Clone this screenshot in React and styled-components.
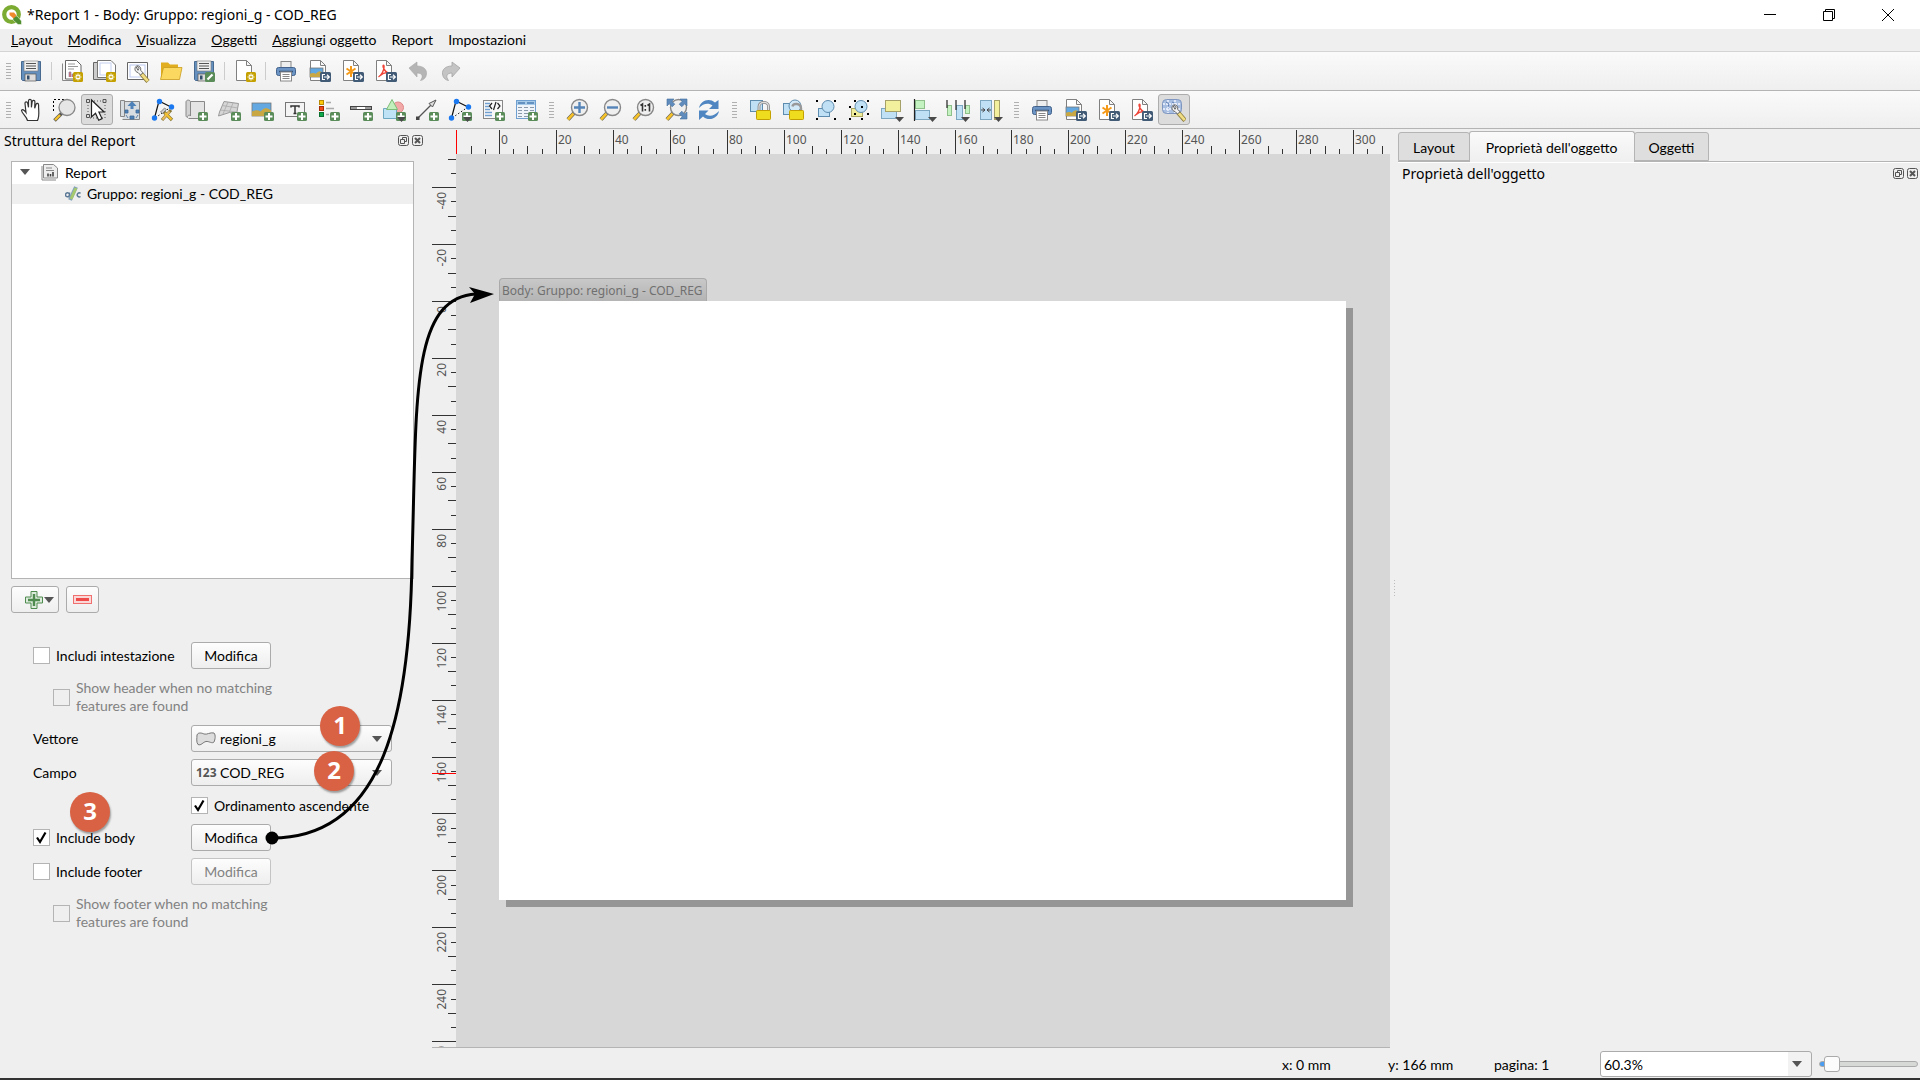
import React from "react";
import styled, { createGlobalStyle, css } from "styled-components";

const UI_FONT = `Lato, "Liberation Sans", sans-serif`;
const TITLE_FONT = `"Noto Sans", "Open Sans", sans-serif`;

// canvas geometry: pixels per millimetre and the offset of 0 mm inside each ruler
const SCALE = 2.847;
const ORIGIN_X = 43;
const ORIGIN_Y = 147;

/* ---------- icon parts ---------- */

const PlusBadge = () => (
  <g>
    <rect x="14" y="14" width="10" height="9" rx="1.5" fill="#5a8c5a" />
    <path d="M19 15v7M15.5 18.5h7" stroke="#fff" strokeWidth="2" />
  </g>
);

const StarBadge = () => (
  <g>
    <rect x="13" y="13" width="10" height="10" rx="1.5" fill="#c4a000" />
    <path d="M18 14.5v7M14.5 18h7M15.7 15.7l4.6 4.6M20.3 15.7l-4.6 4.6" stroke="#fff" strokeWidth="1.1" />
    <circle cx="18" cy="18" r="1" fill="#c4a000" />
  </g>
);

const ExportBadge = () => (
  <g>
    <rect x="13" y="13" width="11" height="10" rx="1.5" fill="#415a75" />
    <path d="M18 15.5h-2.5v5H18M17 18h5M20 15.8l2.3 2.2-2.3 2.2" fill="none" stroke="#fff" strokeWidth="1.2" />
  </g>
);

const MenuArrow = () => <path d="M15 19h9l-4.500 5z" fill="#4a4a4a" />;

const Sheet = () => (
  <path d="M3.500 1.500h10l5 5v15h-15zM13.500 1.500v5h5" fill="#fff" stroke="#808080" />
);

const Lens = ({ children }) => (
  <g>
    <path d="M10 14l-7 7.500" stroke="#555" strokeWidth="4" />
    <path d="M8.500 15.500l-5.500 6" stroke="#f5c22b" strokeWidth="2.600" />
    <path d="M11 13l-2 2" stroke="#222" strokeWidth="3" />
    <circle cx="14.500" cy="9.500" r="8" fill="#efefef" stroke="#888" strokeWidth="1.400" />
    {children}
  </g>
);

const Wrench = () => (
  <g>
    <path d="M14 13.500l7 8" stroke="#8a7a3a" strokeWidth="4.400" />
    <path d="M14.500 14l6.300 7.200" stroke="#f0dc82" strokeWidth="2.800" />
    <path d="M9 6.500c-2 2-1 5.500 2 6l2.500 2.500 2.500-2.200-2.300-2.500c.6-3-1.500-4.800-4-4.500l2.300 2.500-1 2z" fill="#f2f2f2" stroke="#666" />
  </g>
);

const Floppy = () => (
  <g>
    <path d="M2.500 2.500h19v19h-18l-1-1z" fill="#6490c0" stroke="#486a90" />
    <rect x="5" y="2" width="14" height="10" fill="#f0f0f0" stroke="#777" strokeWidth=".6" />
    <path d="M7 4.500h10M7 7h10M7 9.500h10" stroke="#555" />
    <rect x="6" y="15" width="11" height="7" fill="#ddd" stroke="#555" strokeWidth=".7" />
    <rect x="8" y="16.500" width="2.500" height="4" fill="#334d6b" />
  </g>
);

const Nodes = () => (
  <g>
    <path d="M8 3L3.500 20M8 3l12 6" stroke="#111" strokeWidth="1.200" />
    <path d="M20 9L4 20" stroke="#111" strokeDasharray="1.500 2" />
    <circle cx="8.500" cy="3.500" r="2.700" fill="#1a78f0" />
    <circle cx="20.500" cy="9" r="2.700" fill="#1a78f0" />
    <circle cx="3.500" cy="20" r="2.700" fill="#1a78f0" />
  </g>
);

const Landscape = ({ x, y, w, h }) => (
  <g>
    <rect x={x} y={y} width={w} height={h} fill="#63a8e0" stroke="#777" strokeWidth=".8" />
    <path d={`M${x} ${y + h * 0.65}q${w * 0.25} ${-h * 0.2} ${w * 0.45} 0q${w * 0.25} ${-h * 0.5} ${w * 0.55} -1V${y + h}H${x}z`} fill="#c9a743" />
  </g>
);

const Corners = ({ x, y, s }) => (
  <g fill="#000">
    <rect x={x} y={y} width="2" height="2" />
    <rect x={x + s} y={y} width="2" height="2" />
    <rect x={x} y={y + s} width="2" height="2" />
    <rect x={x + s} y={y + s} width="2" height="2" />
  </g>
);

const Padlock = () => (
  <rect x="8.500" y="12.500" width="14" height="9" rx=".8" fill="#f0dc1e" stroke="#c4a000" />
);

const ICONS = {
  save: <Floppy />,
  newReport: (
    <g>
      <path d="M2.500 4.500v17h14" fill="none" stroke="#888" />
      <path d="M5.500 1.500h11l4.500 4.500v14h-15.500z" fill="#fff" stroke="#666" />
      <path d="M8 5h7M8 7.500h10M8 10h6" stroke="#999" />
      <path d="M9 18v-5h2v5M12 18v-3h2v3" fill="#d66" stroke="#88a" strokeWidth=".7" />
      <StarBadge />
    </g>
  ),
  duplicate: (
    <g>
      <path d="M.5 3.500v17h16v-17z" fill="#ccc" stroke="#666" />
      <path d="M4.500 1.500h13.500l4.500 4.500v12.500h-18z" fill="#fff" stroke="#777" />
      <rect x="7" y="4" width="11" height="12" fill="none" stroke="#c5d0f0" />
      <StarBadge />
    </g>
  ),
  manager: (
    <g>
      <path d="M1.500 3.500h20v17h-20z" fill="#fff" stroke="#666" />
      <rect x="4" y="6" width="15" height="12" fill="none" stroke="#bccaf0" />
      <g transform="translate(1 1)"><Wrench /></g>
    </g>
  ),
  open: (
    <g>
      <path d="M2 20V3.500h7l2 2h8V20z" fill="#e0ae1e" />
      <path d="M4.500 8.500h18.500L20.500 20.500H1.500z" fill="#fbd960" stroke="#c99a1b" strokeWidth=".8" />
    </g>
  ),
  saveAs: (
    <g>
      <Floppy />
      <rect x="13" y="13" width="10" height="10" rx="1.500" fill="#5a8c5a" />
      <path d="M15.500 20.500l5-5" stroke="#fff" strokeWidth="2.200" />
    </g>
  ),
  newPage: <g><Sheet /><StarBadge /></g>,
  print: (
    <g>
      <rect x="7" y="2.500" width="10" height="7" fill="#eee" stroke="#888" />
      <rect x="2.500" y="8.500" width="19" height="8" rx="2" fill="#6b94c4" stroke="#43638c" />
      <path d="M5 12.500h14" stroke="#35537a" strokeWidth="1.500" />
      <rect x="6.500" y="13" width="11" height="9" fill="#fff" stroke="#888" />
      <path d="M8.500 15.500h7M8.500 17.500h7M8.500 19.500h7" stroke="#888" />
    </g>
  ),
  exportImage: <g><Sheet /><Landscape x={3} y={9} w={13} h={9} /><ExportBadge /></g>,
  exportSvg: (
    <g>
      <Sheet />
      <path d="M11 7v11M6.500 9.500l9 6M15.500 9.500l-9 6" stroke="#f59a18" strokeWidth="2" />
      <ExportBadge />
    </g>
  ),
  exportPdf: (
    <g>
      <Sheet />
      <path d="M5.500 18c3-2 6-7 5.500-11-.2-1.500-1.300-.5-.8 1 1.200 4 4 6 6.800 6-3-1-7 0-10.500 3" fill="none" stroke="#ef4438" strokeWidth="1.500" />
      <ExportBadge />
    </g>
  ),
  undo: <path d="M3 9l8-6v4c7 0 10 4 9.500 8-.5 4-3 6-6 6.500 3-4 2-7.500-3.500-7.500v4z" fill="#b5b5b5" stroke="#a5a5a5" strokeWidth=".6" />,
  redo: <path d="M21 9l-8-6v4C6 7 3 11 3.500 15c.5 4 3 6 6 6.500-3-4-2-7.500 3.500-7.500v4z" fill="#c4c4c4" stroke="#a5a5a5" strokeWidth=".8" />,
  pan: (
    <path
      d="M8.500 22.500c-1-4-5.500-7-6-10 .8-1.600 2.500-.7 4.500 2L6 5.500C5.800 3.500 8.200 3.300 8.700 5.300l.8 4V2.700c.2-1.900 2.700-1.900 2.900 0v6.600l.8-5.800c.4-1.700 2.700-1.300 2.700.3l-.2 6.400 1.300-4c.7-1.500 2.700-.9 2.600.9C19.300 12 21 17 18.500 22.500z"
      fill="#fff"
      stroke="#333"
      strokeWidth="1.200"
    />
  ),
  zoom: (
    <g>
      <path d="M1.500 13V1.500H14" fill="none" stroke="#000" strokeDasharray="2 2" />
      <path d="M10.500 14.500l-8 8" stroke="#555" strokeWidth="3.600" />
      <path d="M8 17l-5 5" stroke="#f5c22b" strokeWidth="2.400" />
      <circle cx="15" cy="9.500" r="8" fill="#e4e4e4" fillOpacity=".9" stroke="#888" strokeWidth="1.300" />
    </g>
  ),
  select: (
    <g>
      <path d="M3 3h17v17H3z" fill="none" stroke="#555" strokeDasharray="1 2" />
      <path d="M1.500 1.500h3v3h-3zM18 1.500h3v3h-3zM1.500 16.500h3v3h-3z" fill="#ddd" stroke="#555" />
      <path d="M6.500 2v17l4-3.700 3.200 6.900 3.300-1.600-3.100-6.600h5.200z" fill="#fff" stroke="#222" strokeWidth="1.200" />
    </g>
  ),
  moveContent: (
    <g>
      <path d="M2.500 2.500h4v16h-4zM6.500 3.500h15v18h-17" fill="#d8dde2" stroke="#888" />
      <path d="M14 3l4.500 5h-3v3h-3V8h-3z" fill="#4f82b8" />
      <path d="M7 12h3v3H7zM18 12h3v3h-3zM12 18h4v3h-4zM8 17l2 3M20 17l-2 3" fill="#4f82b8" stroke="#3d6a9b" strokeWidth=".8" />
    </g>
  ),
  editNodes: (
    <g>
      <Nodes />
      <path d="M11 22L20 12M12 13l9 9" stroke="#8a7a3a" strokeWidth="3.200" />
      <path d="M11.500 21.500l7-8" stroke="#e8b95a" strokeWidth="2" />
      <path d="M14 15l6.500 6.500" stroke="#f5c22b" strokeWidth="2" />
      <path d="M9.500 14l4-4 2 1.500-4 4z" fill="#ccc" stroke="#666" strokeWidth=".7" />
    </g>
  ),
  addMap: (
    <g>
      <path d="M6.500 3.500h14v17h-16" fill="#e4e4e4" stroke="#888" />
      <path d="M2 4c0-2.500 4.500-2.500 4.500 0v14c-1-1.500-3-1-3 1.500C2 19 2 18 2 17z" fill="#d2d2d2" stroke="#888" />
      <PlusBadge />
    </g>
  ),
  add3d: (
    <g>
      <path d="M7 3.500l14.500 2-2 11-7-2-11 3.500 1-4z" fill="#d6d6d6" stroke="#999" />
      <path d="M11 4l-5 12M16 5l-4 10M5 7.500l16 2.500M3 12l17 2" fill="none" stroke="#aaa" strokeWidth=".8" />
      <PlusBadge />
    </g>
  ),
  addPicture: <g><Landscape x={2} y={5} w={19} h={13} /><PlusBadge /></g>,
  addLabel: (
    <g>
      <rect x="2.500" y="4.500" width="19" height="14" fill="#f4f4f4" stroke="#777" />
      <path d="M8 9.500V8h8v1.500M12 8v8M10.500 15.500h3" fill="none" stroke="#333" strokeWidth="1.500" />
      <PlusBadge />
    </g>
  ),
  addLegend: (
    <g>
      <rect x="3.500" y="2.500" width="4" height="4" fill="#fcc90a" stroke="#b98b00" />
      <rect x="3.500" y="8.500" width="4" height="4" fill="#f04a1a" stroke="#a52a08" />
      <rect x="3.500" y="14.500" width="4" height="4" fill="#12a84c" stroke="#0a7030" />
      <path d="M10 4.500h5M10 10.500h8M10 16.500h3" stroke="#aaa" strokeWidth="1.400" />
      <PlusBadge />
    </g>
  ),
  addScale: (
    <g>
      <rect x="1.500" y="8.500" width="21" height="3" fill="#999" stroke="#444" />
      <path d="M8 10h8" stroke="#fff" strokeWidth="2" />
      <PlusBadge />
    </g>
  ),
  addShape: (
    <g>
      <circle cx="16" cy="9.500" r="5.500" fill="#f4a9a9" stroke="#d88" />
      <path d="M1.500 10.500h13v10h-13z" fill="#bfe3f4" stroke="#6da7c0" />
      <path d="M10 1.500l5.500 10h-11z" fill="#c1f0bd" stroke="#7dbb78" />
      <PlusBadge /><MenuArrow />
    </g>
  ),
  addArrow: (
    <g>
      <path d="M3 20L20 3" stroke="#555" strokeWidth="1.300" />
      <rect x="1" y="18.500" width="3.500" height="3.500" fill="#444" />
      <path d="M21 2l-7 3.500 3.500 3.500z" fill="#ddd" stroke="#555" />
      <PlusBadge />
    </g>
  ),
  addNode: <g><Nodes /><PlusBadge /><MenuArrow /></g>,
  addHtml: (
    <g>
      <rect x="2.500" y="2.500" width="19" height="18" fill="#f8f8f8" stroke="#888" />
      <path d="M4 5.500h5M4 8.500h4M4 11.500h5M4 14.500h7M4 17.500h7" stroke="#6f9fd0" strokeWidth="1.400" />
      <path d="M11 5l-2.500 3L11 11M16.500 5L19 8l-2.500 3M15 4l-2.500 8" fill="none" stroke="#222" strokeWidth="1.200" />
      <PlusBadge />
    </g>
  ),
  addTable: (
    <g>
      <rect x="2.500" y="2.500" width="19" height="18" fill="#eef4fa" stroke="#6f9fd0" />
      <rect x="3" y="3" width="18" height="4" fill="#a9cbea" />
      <path d="M4 5h7M13 5h7" stroke="#4b7fb5" strokeWidth="1.300" />
      <path d="M4 9.500h4M10 9.500h4M16 9.500h4M4 12.500h4M10 12.500h4M16 12.500h4M4 15.500h4M10 15.500h4M4 18.500h4M10 18.500h4" stroke="#8a9aaa" strokeWidth="1.200" />
      <PlusBadge />
    </g>
  ),
  zoomIn: <Lens><path d="M14.500 4v11M9 9.500h11" stroke="#5584b8" strokeWidth="2.400" /></Lens>,
  zoomOut: <Lens><path d="M9 9.500h11" stroke="#5584b8" strokeWidth="2.400" /></Lens>,
  zoomActual: (
    <Lens>
      <path d="M9.500 7.500l2-1.500v7.500M16.500 7.500l2-1.500v7.500M14.300 7v1.800M14.300 11v1.800" fill="none" stroke="#333" strokeWidth="1.600" />
    </Lens>
  ),
  zoomFull: (
    <g>
      <Lens />
      <path d="M3 1h7L7.800 3.200l3 3-2.600 2.600-3-3L3 8zM23 1v7l-2.200-2.200-3 3-2.600-2.600 3-3L16 1zM23 21h-7l2.200-2.200-3-3 2.600-2.600 3 3L23 14z" fill="#5f8cbc" stroke="#456f9e" strokeWidth=".6" />
    </g>
  ),
  refresh: (
    <g fill="#4f86c2">
      <path d="M2 10C3 3 12-1 18 4.500L21.500 2v9H12l3.500-3.500C11.500 4.500 6 5.500 2 10z" />
      <path d="M22 13c-1 7-10 11-16 5.500L2 22v-9.500h9.500L8 16c4 3 9.500 2 14-3z" />
    </g>
  ),
  lock: (
    <g>
      <rect x="2.500" y="2.500" width="12" height="11" fill="#bfe0f5" stroke="#5e8cae" />
      <path d="M11 13V8.500c0-5.500 9.500-5.500 9.500 0V13" fill="none" stroke="#888" strokeWidth="2.800" />
      <path d="M11 13V8.500c0-5.500 9.500-5.500 9.500 0V13" fill="none" stroke="#ddd" strokeWidth="1.200" />
      <Padlock />
    </g>
  ),
  unlock: (
    <g>
      <rect x="2.500" y="5.500" width="10" height="11" fill="#bfe0f5" stroke="#5e8cae" />
      <circle cx="14" cy="8" r="6" fill="#d2e9f7" stroke="#5e8cae" />
      <path d="M11.500 8.500c.5-3.500 8-3.500 8.500 1.500v3" fill="none" stroke="#999" strokeWidth="2.400" />
      <Padlock />
    </g>
  ),
  group: (
    <g>
      <rect x="4.500" y="10.500" width="11" height="8" fill="#bfe0f5" stroke="#5e8cae" />
      <circle cx="14" cy="8.500" r="6" fill="#bfe0f5" stroke="#5e8cae" />
      <Corners x={2} y={2} s={18} />
    </g>
  ),
  ungroup: (
    <g>
      <rect x="4.500" y="10.500" width="11" height="8" fill="#f0ee9a" stroke="#aaa660" />
      <circle cx="14" cy="8.500" r="6" fill="#bfe0f5" stroke="#5e8cae" />
      <Corners x={2} y={8} s={12} />
      <Corners x={7} y={2} s={13} />
    </g>
  ),
  raise: (
    <g>
      <rect x="1.500" y="10.500" width="15" height="10" fill="#bfe0f5" stroke="#7da6c0" />
      <rect x="5.500" y="2.500" width="15" height="11" fill="#f2f09c" stroke="#a5a168" />
      <MenuArrow />
    </g>
  ),
  align: (
    <g>
      <rect x="2.500" y="2.500" width="9" height="8" fill="#c4f2c0" stroke="#8fbf8b" />
      <rect x="2.500" y="12.500" width="14" height="9" fill="#bfe0f5" stroke="#7da6c0" />
      <path d="M1.500 1v22" stroke="#222" strokeWidth="1.200" />
      <MenuArrow />
    </g>
  ),
  distribute: (
    <g>
      <rect x="1.500" y="7.500" width="4" height="10" fill="#c4f2c0" stroke="#8fbf8b" />
      <rect x="10.500" y="7.500" width="6" height="14" fill="#bfe0f5" stroke="#7da6c0" />
      <rect x="19.500" y="7.500" width="4" height="8" fill="#c4f2c0" stroke="#8fbf8b" />
      <path d="M1 2v8M10 2v10M19 2v9" stroke="#222" strokeWidth="1.200" />
      <MenuArrow />
    </g>
  ),
  resize: (
    <g>
      <rect x="1.500" y="2.500" width="11" height="19" fill="#bfe0f5" stroke="#7da6c0" />
      <path d="M2 12h4M3.500 10l2.500 2-2.500 2M12 12H8M10.500 10L8 12l2.500 2" fill="none" stroke="#444" />
      <rect x="15.500" y="2.500" width="5" height="19" fill="#f2f09c" stroke="#a5a168" />
      <MenuArrow />
    </g>
  ),
  atlas: (
    <g>
      <rect x=".5" y="1.500" width="19" height="14" rx="4" fill="#a9bfe2" stroke="#7f97c0" />
      <path d="M1 6h18M1 11h18M6 2v13M13 2v13" stroke="#f4f7ff" strokeWidth="1.400" strokeDasharray="2 1" />
      <path d="M4 4l3 2-1 3M10 4l2 1" stroke="#5f7fb4" />
      <g transform="translate(2 1)"><Wrench /></g>
    </g>
  ),
};

const Icon = ({ name }) => (
  <svg width="24" height="24" viewBox="0 0 24 24" fill="none" aria-hidden="true">
    {ICONS[name]}
  </svg>
);

const QgisLogo = () => (
  <svg width="20" height="20" viewBox="0 0 20 20" aria-hidden="true">
    <circle cx="9.500" cy="9.500" r="7.300" fill="none" stroke="#7cab32" strokeWidth="4.200" />
    <path d="M11 11h4l4.500 5v3.500h-3.500L11 15z" fill="#4f8f2f" stroke="#fff" strokeWidth=".5" />
    <path d="M7.500 7.500h4.500l2.500 3-3 3-4-3.500z" fill="#f0892b" />
  </svg>
);

const DownArrow = () => (
  <svg width="10" height="6" viewBox="0 0 10 6" aria-hidden="true">
    <path d="M0 0h10L5 6z" fill="#555" />
  </svg>
);

/* ---------- window frame ---------- */

const GlobalStyle = createGlobalStyle`
  * {
    box-sizing: border-box;
  }
  body {
    margin: 0;
    background: #efefef;
    color: #000;
    font-family: ${UI_FONT};
    font-size: 14px;
    overflow: hidden;
  }
  button, select, input {
    font: inherit;
    color: inherit;
    margin: 0;
  }
`;

const Window = styled.div`
  position: relative;
  display: flex;
  flex-direction: column;
  height: 100vh;
  border-bottom: 2px solid #333;
`;

const TitleBar = styled.header`
  display: flex;
  align-items: center;
  gap: 5px;
  height: 29px;
  padding-left: 2px;
  background: #fff;
  font-family: ${TITLE_FONT};
`;

const WindowTitle = styled.h1`
  flex: 1;
  margin: 0;
  font-size: 14px;
  font-weight: 400;
`;

const WindowButton = styled.button`
  display: grid;
  place-items: center;
  width: 59px;
  height: 28px;
  padding: 0;
  border: 0;
  background: none;
`;

const WindowButtons = styled.div`
  display: flex;
  margin-right: 3px;
`;

const MenuBar = styled.nav`
  display: flex;
  gap: 1px;
  height: 23px;
  padding-left: 4px;
  border-bottom: 1px solid #d4d4d4;
`;

const MenuItem = styled.button`
  padding: 0 7px;
  border: 0;
  background: none;
  line-height: 22px;
`;

const Bar = styled.div`
  display: flex;
  align-items: center;
  gap: 1px;
  height: ${({ $height }) => $height}px;
  padding-left: 6px;
  border-bottom: 1px solid #b4b4b4;
  background: linear-gradient(#fafafa, #efefef);
`;

const Grip = styled.span`
  width: ${({ $first }) => ($first ? 8 : 17)}px;
  height: 18px;
  padding-left: ${({ $first }) => ($first ? 0 : 6)}px;

  &::before {
    content: "";
    display: block;
    width: 5px;
    height: 18px;
    background: radial-gradient(circle, #b0b0b0 35%, transparent 45%) 0 0 / 2px 3px;
  }
`;

const Separator = styled.span`
  width: 1px;
  height: 18px;
  margin: 0 3px;
  background: #ccc;
`;

const ToolButton = styled.button`
  display: grid;
  place-items: center;
  width: 32px;
  height: 31px;
  padding: 0;
  border: 1px solid transparent;
  border-radius: 3px;
  background: none;

  ${({ $pressed }) =>
    $pressed &&
    css`
      border-color: #adadad;
      background: #dcdcdc;
    `}
`;

/* ---------- docks ---------- */

const Workspace = styled.main`
  display: flex;
  flex: 1;
  min-height: 0;
`;

const LeftDock = styled.aside`
  position: relative;
  flex: none;
  width: 432px;
`;

const DockHeader = styled.div`
  display: flex;
  align-items: center;
  gap: 3px;
  height: 22px;
  padding: 0 ${({ $right }) => $right}px 0 4px;
  font-family: ${TITLE_FONT};
`;

const DockTitle = styled.h2`
  flex: 1;
  margin: 0;
  font-size: 14px;
  font-weight: 400;
`;

const DockButton = styled.button`
  display: grid;
  padding: 0;
  border: 0;
  background: none;
`;

const Tree = styled.ul`
  height: 418px;
  margin: 10px 18px 7px 11px;
  padding: 0;
  border: 1px solid #b4b4b4;
  background: #fff;
  list-style: none;
`;

const TreeRow = styled.li`
  display: flex;
  align-items: center;
  gap: 6px;
  height: ${({ $child }) => ($child ? 20 : 22)}px;
  padding: 0 0 2px ${({ $child }) => ($child ? 53 : 8)}px;
  background: ${({ $child }) => ($child ? "#efefef" : "#fff")};
`;

const Twisty = styled.span`
  display: grid;
  margin-right: 5px;
`;

const TreeActions = styled.div`
  display: flex;
  gap: 7px;
  padding-left: 11px;
`;

const raised = css`
  border: 1px solid #ababab;
  border-radius: 3px;
  background: linear-gradient(#fdfdfd, #eeeeee);
`;

const ActionButton = styled.button`
  ${raised}
  display: flex;
  align-items: center;
  justify-content: flex-end;
  gap: 1px;
  height: 27px;
  padding: 0 ${({ $menu }) => ($menu ? 4 : 6)}px 0 ${({ $menu }) => ($menu ? 13 : 6)}px;
`;

const Form = styled.form`
  display: grid;
  gap: 7px;
  padding: 29px 0 0 33px;
`;

const Row = styled.div`
  display: grid;
  grid-template-columns: 158px 201px;
  align-items: center;
  min-height: ${({ $height }) => $height || 27}px;
`;

const Hint = styled.label`
  display: flex;
  align-items: center;
  gap: 6px;
  width: 240px;
  min-height: 42px;
  padding-left: 20px;
  color: #828282;
  line-height: 18px;
`;

const CheckLabel = styled.label`
  display: flex;
  align-items: center;
  gap: 6px;
  white-space: nowrap;
`;

const CheckStack = styled.span`
  display: grid;
  flex: none;

  > * {
    grid-area: 1 / 1;
  }
  svg {
    pointer-events: none;
  }
`;

const CheckInput = styled.input`
  appearance: none;
  width: 17px;
  height: 17px;
  border: 1px solid #b4b4b4;
  background: #fff;

  &:disabled {
    background: #efefef;
  }
`;

const FormButton = styled.button`
  ${raised}
  width: 80px;
  height: 27px;
  padding: 0;

  &:disabled {
    border-color: #c4c4c4;
    color: #828282;
  }
`;

const SelectStack = styled.span`
  display: grid;
  align-items: center;

  > * {
    grid-area: 1 / 1;
  }
`;

const SelectBox = styled.select`
  ${raised}
  appearance: none;
  width: 100%;
  height: 27px;
  padding: 0 28px;
`;

const SelectIcon = styled.span`
  display: grid;
  padding-left: 5px;
  pointer-events: none;
  color: #555;
  font-family: ${TITLE_FONT};
  font-size: 12px;
  font-weight: 700;
`;

const SelectArrow = styled.span`
  display: grid;
  justify-self: end;
  padding-right: 10px;
  pointer-events: none;
`;

/* numbered markers and the arrow lie over the window */

const Marker = styled.span`
  position: absolute;
  left: ${({ $x }) => $x}px;
  top: ${({ $y }) => $y}px;
  width: 40px;
  height: 40px;
  border-radius: 50%;
  background: #d96244;
  box-shadow: 1px 2px 2px rgba(0, 0, 0, 0.35);
  color: #fff;
  font-family: ${TITLE_FONT};
  font-size: 24px;
  font-weight: 700;
  line-height: 38px;
  text-align: center;
`;

const Connector = styled.svg`
  position: absolute;
  left: 260px;
  top: 280px;
  pointer-events: none;
`;

/* ---------- canvas ---------- */

const CanvasArea = styled.section`
  display: grid;
  flex: 1;
  grid-template-columns: 24px 1fr;
  grid-template-rows: 25px 1fr;
  min-width: 0;
  border-bottom: 1px solid #b4b4b4;
`;

const Ruler = styled.svg`
  width: 100%;
  height: 100%;
  overflow: hidden;
  font-family: ${TITLE_FONT};
  font-size: 12px;
  fill: #555;
`;

const RulerCell = styled.div`
  min-width: 0;
  min-height: 0;
  overflow: hidden;
`;

const Canvas = styled.div`
  min-width: 0;
  overflow: hidden;
  padding: 124px 0 0 43px;
  background: #d7d7d7;
`;

const PageTab = styled.div`
  width: max-content;
  height: 23px;
  padding: 0 3px 0 2px;
  border: 1px solid #aaa;
  border-bottom: 0;
  border-radius: 4px 4px 0 0;
  background: linear-gradient(#c8c8c8, #b4b4b4);
  color: #707070;
  font-family: ${TITLE_FONT};
  font-size: 12px;
  line-height: 23px;
`;

const Page = styled.div`
  width: 847px;
  height: 599px;
  background: #fff;
  box-shadow: 7px 7px 0 #969696;
`;

const Splitter = styled.div`
  display: grid;
  place-items: center;
  width: 8px;

  &::before {
    content: "";
    width: 1px;
    height: 18px;
    background: repeating-linear-gradient(#bbb 0 1px, transparent 1px 3px);
  }
`;

const RightDock = styled.aside`
  flex: none;
  width: 522px;
  padding-top: 2px;
`;

const Tabs = styled.div`
  display: flex;
  align-items: flex-end;
  height: 31px;
  border-bottom: 1px solid #b4b4b4;
  box-shadow: 0 1px 0 #fff;
`;

const Tab = styled.button`
  height: 29px;
  padding: 2px 14px 0;
  border: 1px solid #b4b4b4;
  border-radius: 3px 3px 0 0;
  background: #dedede;

  ${({ $active }) =>
    $active &&
    css`
      height: 31px;
      margin: 0 -1px -1px;
      padding: 0 16px;
      border-bottom: 0;
      background: linear-gradient(#fafafa, #efefef);
    `}
`;

/* ---------- status bar ---------- */

const StatusBar = styled.footer`
  display: flex;
  align-items: center;
  justify-content: flex-end;
  height: 30px;
  padding: 2px 2px 0 0;
`;

const StatusText = styled.span`
  width: 106px;
`;

const ZoomStack = styled(SelectStack)`
  width: 212px;
  margin-right: 7px;
`;

const ZoomSelect = styled(SelectBox)`
  height: 26px;
  padding: 0 3px;
  background: linear-gradient(90deg, #fff 187px, #f2f2f2 187px);
`;

const ZoomSlider = styled.input`
  appearance: none;
  width: 99px;
  height: 18px;
  background: none;

  &::-webkit-slider-runnable-track {
    height: 6px;
    border: 1px solid #aaa;
    border-radius: 3px;
    background: linear-gradient(90deg, #4a9df0 8px, #d6d9d6 8px);
  }
  &::-webkit-slider-thumb {
    appearance: none;
    width: 16px;
    height: 16px;
    margin-top: -6px;
    border: 1px solid #aaa;
    border-radius: 3px;
    background: #fcfcfc;
  }
`;

/* ---------- pieces ---------- */

const MENUS = [
  ["L", "ayout"],
  ["M", "odifica"],
  ["V", "isualizza"],
  ["O", "ggetti"],
  ["A", "ggiungi oggetto"],
  ["", "Report"],
  ["", "Impostazioni"],
];

const FILE_TOOLS = [
  "save", "|", "newReport", "duplicate", "manager", "open", "saveAs", "|", "newPage", "|",
  "print", "exportImage", "exportSvg", "exportPdf", "undo", "redo",
];

const LAYOUT_TOOLS = [
  "pan", "zoom", "select", "moveContent", "editNodes", "addMap", "add3d", "addPicture",
  "addLabel", "addLegend", "addScale", "addShape", "addArrow", "addNode", "addHtml", "addTable", ":",
  "zoomIn", "zoomOut", "zoomActual", "zoomFull", "refresh", ":",
  "lock", "unlock", "group", "ungroup", "raise", "align", "distribute", "resize", ":",
  "print", "exportImage", "exportSvg", "exportPdf", "atlas",
];

const PRESSED = ["select", "atlas"];

function Toolbar({ tools, height }) {
  return (
    <Bar $height={height}>
      <Grip $first />
      {tools.map((tool, i) => {
        if (tool === "|") return <Separator key={i} />;
        if (tool === ":") return <Grip key={i} />;
        return (
          <ToolButton key={i} type="button" aria-label={tool} $pressed={PRESSED.includes(tool)}>
            <Icon name={tool} />
          </ToolButton>
        );
      })}
    </Bar>
  );
}

function DockButtons() {
  return (
    <>
      <DockButton type="button" aria-label="Float">
        <svg width="11" height="11" viewBox="0 0 11 11" fill="none" stroke="#555">
          <rect x=".5" y=".5" width="10" height="10" rx="2" />
          <path d="M4.500 4.500v-2h4v4h-2M2.500 4.500h4v4h-4z" />
        </svg>
      </DockButton>
      <DockButton type="button" aria-label="Close">
        <svg width="11" height="11" viewBox="0 0 11 11" fill="none" stroke="#555">
          <rect x=".5" y=".5" width="10" height="10" rx="2" />
          <path d="M3 3l5 5M8 3L3 8" strokeWidth="2" />
        </svg>
      </DockButton>
    </>
  );
}

function Check({ checked, disabled }) {
  return (
    <CheckStack>
      <CheckInput type="checkbox" defaultChecked={checked} disabled={disabled} />
      {checked && (
        <svg width="17" height="17" viewBox="0 0 17 17" fill="none" stroke="#000" strokeWidth="2.200">
          <path d="M4 8.500l3 4.500L12.500 3.500" />
        </svg>
      )}
    </CheckStack>
  );
}

function range(from, to, step) {
  const out = [];
  for (let v = from; v <= to; v += step) out.push(v);
  return out;
}

const tickLength = (mm) => (mm % 20 === 0 ? 24 : mm % 10 === 0 ? 8 : 5);

function HorizontalRuler() {
  return (
    <Ruler>
      {range(-10, 310, 5).map((mm) => {
        const x = Math.round(ORIGIN_X + mm * SCALE);
        return (
          <g key={mm}>
            <rect x={x} y={25 - tickLength(mm)} width="1" height={tickLength(mm)} fill="#333" />
            {mm % 20 === 0 && <text x={x + 2} y="15">{mm}</text>}
          </g>
        );
      })}
      <rect x="0" y="1" width="1" height="24" fill="#f00" />
    </Ruler>
  );
}

function VerticalRuler() {
  return (
    <Ruler>
      {range(-50, 260, 5).map((mm) => {
        const y = Math.round(ORIGIN_Y + mm * SCALE);
        return (
          <g key={mm}>
            <rect x={24 - tickLength(mm)} y={y} width={tickLength(mm)} height="1" fill="#333" />
            {mm % 20 === 0 && (
              <text transform={`translate(14 ${y + 5}) rotate(-90)`} textAnchor="end">{mm}</text>
            )}
          </g>
        );
      })}
      <rect x="0" y="619" width="24" height="1" fill="#f00" />
    </Ruler>
  );
}

function ReportDock() {
  return (
    <LeftDock>
      <DockHeader $right={9}>
        <DockTitle>Struttura del Report</DockTitle>
        <DockButtons />
      </DockHeader>
      <Tree>
        <TreeRow>
          <Twisty><DownArrow /></Twisty>
          <svg width="18" height="18" viewBox="0 0 18 18" fill="none" stroke="#888">
            <path d="M2.500 1.500h10l4 3.500v10h-14z" fill="#eee" />
            <path d="M1 3v14h14M5 5h6M5 7.500h8" />
            <path d="M7 13.500v-3M9.500 13.500V11M12 13.500V9" stroke="#444" strokeWidth="1.600" />
          </svg>
          Report
        </TreeRow>
        <TreeRow $child>
          <svg width="16" height="16" viewBox="0 0 16 16" fill="none">
            <path d="M4.500 7.500v5M4.500 10a2 2 0 1 0-.1.500M15.500 8.300a2 2 0 1 0 0 3.200" stroke="#5a7896" strokeWidth="1.500" />
            <path d="M5 15l6-13" stroke="#7fa0be" strokeWidth="4" />
            <path d="M6 14l5-11" stroke="#a6c86e" strokeWidth="3" />
          </svg>
          Gruppo: regioni_g - COD_REG
        </TreeRow>
      </Tree>
      <TreeActions>
        <ActionButton type="button" aria-label="Add" $menu>
          <svg width="18" height="18" viewBox="0 0 18 18" fill="none" stroke="#4f8a4f">
            <path d="M6 .5h6v5.500h5.500v6H12v5.500H6V12H.5V6H6z" fill="#dcebdc" />
            <path d="M9 3v12M3 9h12" strokeWidth="2.400" />
          </svg>
          <DownArrow />
        </ActionButton>
        <ActionButton type="button" aria-label="Remove">
          <svg width="19" height="9" viewBox="0 0 19 9">
            <rect x=".5" y=".5" width="18" height="8" fill="#fbd8d8" stroke="#f07070" />
            <rect x="3" y="3" width="13" height="3" fill="#ef4b4b" />
          </svg>
        </ActionButton>
      </TreeActions>
      <Form>
        <Row>
          <CheckLabel><Check />Includi intestazione</CheckLabel>
          <FormButton type="button">Modifica</FormButton>
        </Row>
        <Hint><Check disabled />Show header when no matching features are found</Hint>
        <Row>
          <label htmlFor="layer">Vettore</label>
          <SelectStack>
            <SelectBox id="layer"><option>regioni_g</option></SelectBox>
            <SelectIcon>
              <svg width="20" height="14" viewBox="0 0 20 14">
                <path d="M1 3c1-3 5-2 7-1 3 1 6-2 10-1 2 2 1 7 0 9-2 2-5-1-8-.5C7 10 5 14 2 12.500 0 10 1 6 1 3z" fill="#ddd" stroke="#777" />
              </svg>
            </SelectIcon>
            <SelectArrow><DownArrow /></SelectArrow>
          </SelectStack>
        </Row>
        <Row>
          <label htmlFor="field">Campo</label>
          <SelectStack>
            <SelectBox id="field"><option>COD_REG</option></SelectBox>
            <SelectIcon>123</SelectIcon>
            <SelectArrow><DownArrow /></SelectArrow>
          </SelectStack>
        </Row>
        <Row $height={24}>
          <span />
          <CheckLabel><Check checked />Ordinamento ascendente</CheckLabel>
        </Row>
        <Row>
          <CheckLabel><Check checked />Include body</CheckLabel>
          <FormButton type="button">Modifica</FormButton>
        </Row>
        <Row>
          <CheckLabel><Check />Include footer</CheckLabel>
          <FormButton type="button" disabled>Modifica</FormButton>
        </Row>
        <Hint><Check disabled />Show footer when no matching features are found</Hint>
      </Form>
    </LeftDock>
  );
}

function App() {
  return (
    <Window>
      <GlobalStyle />
      <TitleBar>
        <QgisLogo />
        <WindowTitle>*Report 1 - Body: Gruppo: regioni_g - COD_REG</WindowTitle>
        <WindowButtons>
          <WindowButton type="button" aria-label="Minimize">
            <svg width="12" height="12"><path d="M0 5.500h12" stroke="#000" /></svg>
          </WindowButton>
          <WindowButton type="button" aria-label="Restore">
            <svg width="12" height="12" fill="none" stroke="#000">
              <path d="M.5 2.500h9v9h-9zM2.500 2.500v-2h9v9h-2" />
            </svg>
          </WindowButton>
          <WindowButton type="button" aria-label="Close window">
            <svg width="12" height="12" stroke="#000"><path d="M0 0l12 12M12 0L0 12" /></svg>
          </WindowButton>
        </WindowButtons>
      </TitleBar>
      <MenuBar>
        {MENUS.map(([key, rest]) => (
          <MenuItem key={rest} type="button"><u>{key}</u>{rest}</MenuItem>
        ))}
      </MenuBar>
      <Toolbar tools={FILE_TOOLS} height={39} />
      <Toolbar tools={LAYOUT_TOOLS} height={38} />
      <Workspace>
        <ReportDock />
        <CanvasArea>
          <RulerCell />
          <RulerCell><HorizontalRuler /></RulerCell>
          <RulerCell><VerticalRuler /></RulerCell>
          <Canvas>
            <PageTab>Body: Gruppo: regioni_g - COD_REG</PageTab>
            <Page />
          </Canvas>
        </CanvasArea>
        <Splitter />
        <RightDock>
          <Tabs>
            <Tab type="button">Layout</Tab>
            <Tab type="button" $active>Proprietà dell'oggetto</Tab>
            <Tab type="button">Oggetti</Tab>
          </Tabs>
          <DockHeader $right={2}>
            <DockTitle>Proprietà dell'oggetto</DockTitle>
            <DockButtons />
          </DockHeader>
        </RightDock>
      </Workspace>
      <StatusBar>
        <StatusText>x: 0 mm</StatusText>
        <StatusText>y: 166 mm</StatusText>
        <StatusText>pagina: 1</StatusText>
        <ZoomStack>
          <ZoomSelect aria-label="Zoom"><option>60.3%</option></ZoomSelect>
          <SelectArrow><DownArrow /></SelectArrow>
        </ZoomStack>
        <ZoomSlider type="range" aria-label="Zoom level" min="0" max="100" defaultValue="5" />
      </StatusBar>
      <Marker $x={320} $y={706}>1</Marker>
      <Marker $x={314} $y={751}>2</Marker>
      <Marker $x={70} $y={792}>3</Marker>
      <Connector width="240" height="570" viewBox="260 280 240 570" fill="none" aria-hidden="true">
        <circle cx="272" cy="838" r="6.500" fill="#000" />
        <path d="M272 838C385 838 410 710 412 560C417 400 410 298 476 294" stroke="#000" strokeWidth="3" />
        <path d="M494 294l-24 9 5-9-6-7z" fill="#000" />
      </Connector>
    </Window>
  );
}

export default App;
